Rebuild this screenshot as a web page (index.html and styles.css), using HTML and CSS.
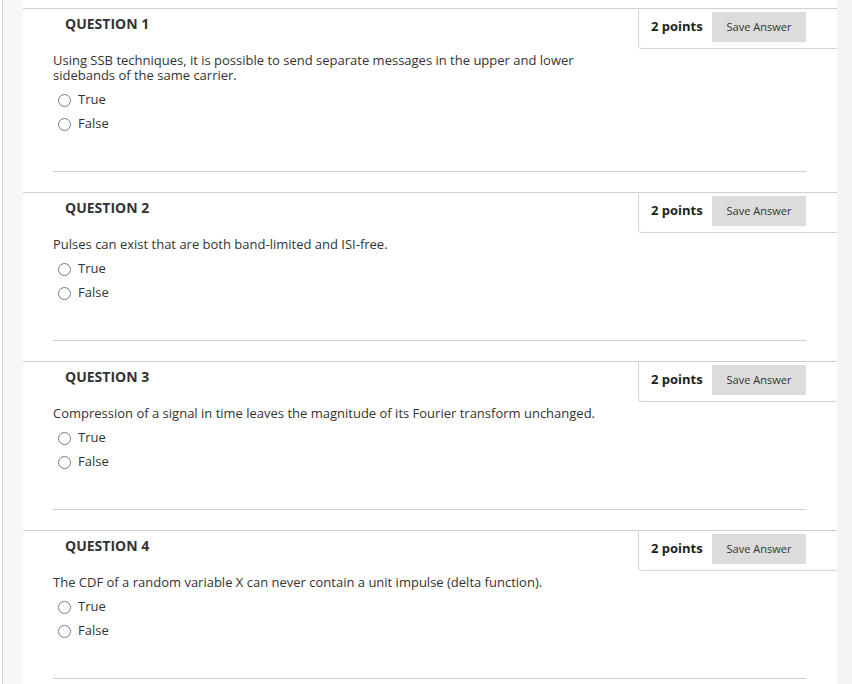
FILE: index.html
```html
<!DOCTYPE html>
<html lang="en">
<head>
<meta charset="utf-8">
<title>Quiz</title>
<link rel="stylesheet" href="styles.css">
</head>
<body>
<div class="page">
  <div class="rail"></div>
  <main class="main">
    <section class="question">
      <div class="q-head">
        <h3 class="q-title">QUESTION 1</h3>
        <div class="points-box">
          <span class="points">2 points</span>
          <button class="save">Save Answer</button>
        </div>
      </div>
      <p class="q-text">Using SSB techniques, it is possible to send separate messages in the upper and lower sidebands of the same carrier.</p>
      <label class="opt"><input type="radio" name="q1"><span>True</span></label>
      <label class="opt"><input type="radio" name="q1"><span>False</span></label>
      <hr class="sep">
    </section>
    <section class="question">
      <div class="q-head">
        <h3 class="q-title">QUESTION 2</h3>
        <div class="points-box">
          <span class="points">2 points</span>
          <button class="save">Save Answer</button>
        </div>
      </div>
      <p class="q-text">Pulses can exist that are both band-limited and ISI-free.</p>
      <label class="opt"><input type="radio" name="q2"><span>True</span></label>
      <label class="opt"><input type="radio" name="q2"><span>False</span></label>
      <hr class="sep">
    </section>
    <section class="question">
      <div class="q-head">
        <h3 class="q-title">QUESTION 3</h3>
        <div class="points-box">
          <span class="points">2 points</span>
          <button class="save">Save Answer</button>
        </div>
      </div>
      <p class="q-text">Compression of a signal in time leaves the magnitude of its Fourier transform unchanged.</p>
      <label class="opt"><input type="radio" name="q3"><span>True</span></label>
      <label class="opt"><input type="radio" name="q3"><span>False</span></label>
      <hr class="sep">
    </section>
    <section class="question">
      <div class="q-head">
        <h3 class="q-title">QUESTION 4</h3>
        <div class="points-box">
          <span class="points">2 points</span>
          <button class="save">Save Answer</button>
        </div>
      </div>
      <p class="q-text">The CDF of a random variable X can never contain a unit impulse (delta function).</p>
      <label class="opt"><input type="radio" name="q4"><span>True</span></label>
      <label class="opt"><input type="radio" name="q4"><span>False</span></label>
      <hr class="sep">
    </section>
  </main>
  <div class="gutter"></div>
</div>
</body>
</html>
```
FILE: styles.css
```css
* { box-sizing: border-box; }
html, body { margin: 0; padding: 0; background: #fff; }
body {
  font-family: "Open Sans", "Liberation Sans", sans-serif;
  color: #333;
  height: 684px;
  overflow: hidden;
}
.page {
  display: flex;
  min-height: 684px;
}
.rail {
  width: 21px;
  margin-left: 2px;
  border-left: 1px solid #cfcfcf;
  background: #f7f7f7;
  flex: none;
}
.gutter {
  width: 15px;
  background: #f5f5f5;
  flex: none;
}
.main {
  flex: 1;
  padding-top: 8px;
}
.question {
  border-top: 1px solid #cfcfcf;
  padding-bottom: 20px;
}
.q-head {
  display: flex;
  justify-content: space-between;
  align-items: flex-start;
}
.q-title {
  margin: 0;
  padding: 5px 0 0 42px;
  font-size: 14px;
  line-height: 20px;
  font-weight: 700;
  color: #333;
}
.points-box {
  width: 199px;
  height: 40px;
  border-left: 1px solid #d4d4d4;
  border-bottom: 1px solid #d4d4d4;
  border-bottom-left-radius: 4px;
  display: flex;
  align-items: center;
  padding: 0 31px 4px 12px;
  justify-content: space-between;
}
.points {
  font-size: 13px;
  font-weight: 700;
  color: #222;
  margin-bottom: 2px;
}
.save {
  width: 94px;
  height: 30px;
  border: none;
  border-radius: 0;
  background: #dcdcdc;
  color: #333;
  font-family: "Open Sans", "Liberation Sans", sans-serif;
  font-size: 11px;
  padding: 0;
}
.q-text {
  margin: 4px 0 4px 30px;
  max-width: 560px;
  font-size: 13px;
  line-height: 15px;
  color: #333;
}
.opt {
  display: flex;
  align-items: center;
  height: 24px;
  padding-left: 35px;
  font-size: 13px;
  color: #333;
}
.opt input {
  appearance: none;
  -webkit-appearance: none;
  width: 13px;
  height: 13px;
  margin: 3px 7px 0 0;
  border: 1px solid #7a7a7a;
  border-radius: 50%;
  background: #fff;
  flex: none;
}
.sep {
  margin: 36px 31px 0 30px;
  border: none;
  border-top: 1px solid #cfcfcf;
  height: 0;
}
```
